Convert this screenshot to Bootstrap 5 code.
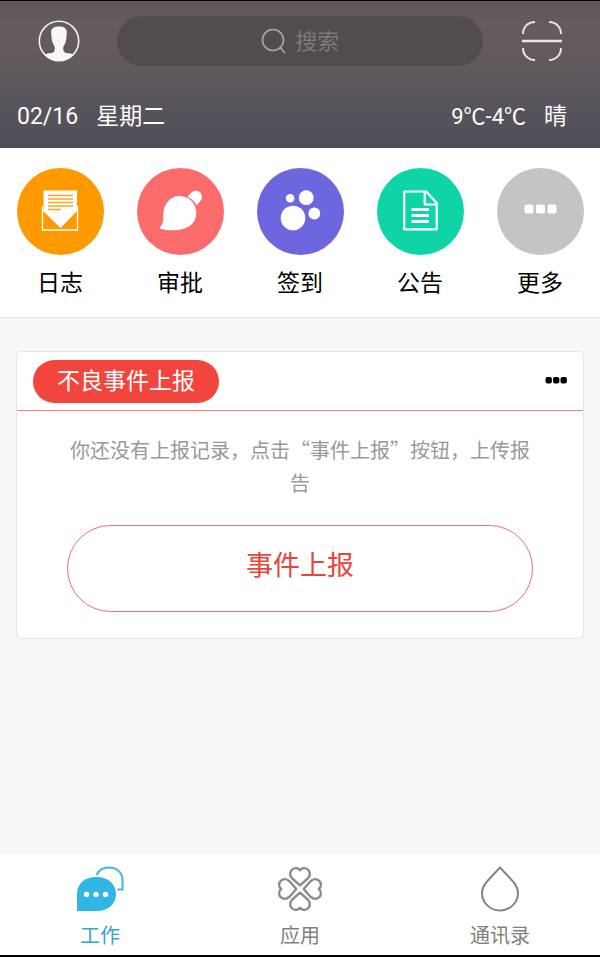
<!DOCTYPE html>
<html lang="zh-CN">
<head>
<meta charset="utf-8">
<meta name="viewport" content="width=device-width, initial-scale=1">
<title>工作</title>
<link href="https://cdn.jsdelivr.net/npm/bootstrap@5.3.0/dist/css/bootstrap.min.css" rel="stylesheet">
<style>
  body { font-family: Roboto, "Noto Sans CJK SC", sans-serif; background: #f7f7f7; color: #000; border-top: 1px solid #000; border-bottom: 2px solid #000; }
  svg { display: block; }
  .top-area { background: linear-gradient(#5d5558, #655c60 18%, #5d575d 55%, #504e58); padding: 15px 0 14px; }
  .side-slot { flex: 0 0 117px; }
  .search-pill { height: 50px; background: #524b50; gap: 8px; }
  .search-glyph { width: 46%; margin-left: 2px; }
  .search-pill input { color: #ddd; font-size: 22px; line-height: 32px; padding: 2px 0 0; outline: 0; min-width: 0; }
  .search-pill input::placeholder { color: #7d7a7c; opacity: 1; }
  .info-row { font-size: 23px; line-height: 34px; padding: 0 33px 0 17px; margin-top: 34px; }
  .info-row .d-flex { gap: 18px; }
  .degrees { font-size: 22px; }
  .shortcut-bar { padding: 20px 0 16px; border-bottom: 1px solid #e2e2e2; }
  .shortcut { font-size: 23px; line-height: 34px; gap: 12px; color: #000; }
  .disc { width: 87px; height: 87px; }
  .disc-orange { background: #ff9900; }
  .disc-coral { background: #fa6c6c; }
  .disc-violet { background: #6e66df; }
  .disc-green { background: #0fd4a7; }
  .disc-gray { background: #c4c4c4; }
  .report-card { margin: 33px 16px; border: 1px solid #e5e5e5; border-radius: 5px; }
  .report-head { padding: 8px 15px 7px 16px; border-bottom: 1px solid #f0857f; }
  .report-tag { background: #f1453d; font-size: 23px; line-height: 43px; padding: 0 24px; font-weight: 400; }
  .report-body { padding: 22px 50px 26px; }
  .report-note { font-family: "Noto Sans CJK SC", sans-serif; font-size: 20px; line-height: 33px; color: #999; margin-bottom: 26px; }
  .report-btn { height: 87px; border: 1px solid #ee716b; color: #e8453c; font-size: 27px; padding: 0 0 4px; }
  .report-btn:hover { background: #f1453d; color: #fff; }
  .tab-item { font-size: 20px; line-height: 30px; gap: 8px; color: #808080; padding: 11px 0 4px; }
  .tab-item.current { color: #33a5cf; }
</style>
<script src="https://cdn.jsdelivr.net/npm/bootstrap@5.3.0/dist/js/bootstrap.bundle.min.js"></script>
</head>
<body class="d-flex flex-column min-vh-100">
<header class="top-area text-white">
  <div class="d-flex align-items-center">
    <div class="side-slot d-flex justify-content-center">
      <button type="button" class="btn p-0 border-0" aria-label="个人中心">
        <svg width="42" height="42" viewBox="0 0 42 42"><circle cx="21" cy="21" r="19.7" fill="none" stroke="#f4f2f3" stroke-width="1.6"/><path fill="#f8f7f8" d="M21 6.500c5.500 0 8 2 7.800 6-.2 5-.6 10-2.800 13-1 1.500-1 4-.3 5.800 1 2.400 6 1.600 9.600 3.200-8 8-20.600 8-28.600 0 3.600-1.600 8.600-.8 9.600-3.200.7-1.800.7-4.300-.3-5.800-2.200-3-2.600-8-2.800-13-.2-4 2.300-6 7.800-6z"/></svg>
      </button>
    </div>
    <label class="search-pill rounded-pill d-flex align-items-center flex-fill">
      <span class="search-glyph d-flex justify-content-end"><svg width="26" height="26" viewBox="0 0 26 26" fill="none" stroke="#aaa6a8" stroke-width="1.600"><circle cx="12" cy="12" r="10.500"/><path d="M19 19.500l5 5.500"/></svg></span>
      <input type="text" class="bg-transparent border-0 flex-fill w-50" placeholder="搜索" aria-label="搜索">
    </label>
    <div class="side-slot d-flex justify-content-center">
      <button type="button" class="btn p-0 border-0" aria-label="扫一扫">
        <svg width="42" height="42" viewBox="0 0 42 42" fill="none" stroke="#e8e6e7" stroke-width="2"><path d="M2 14C2 7 7 2 14 2M28 2c7 0 12 5 12 12M40 28c0 7-5 12-12 12M14 40C7 40 2 35 2 28"/><path d="M1 21h40" stroke-width="2.600"/></svg>
      </button>
    </div>
  </div>
  <div class="info-row d-flex justify-content-between">
    <div class="d-flex"><span>02/16</span><span>星期二</span></div>
    <div class="d-flex"><span class="degrees">9℃-4℃</span><span>晴</span></div>
  </div>
</header>

<nav class="shortcut-bar bg-white" aria-label="快捷入口">
  <div class="row g-0 row-cols-5">
    <a href="#" class="col shortcut d-flex flex-column align-items-center text-decoration-none">
      <span class="disc disc-orange rounded-circle"><svg viewBox="0 0 87 87"><path d="M25.500 41v24h35V41" fill="none" stroke="#fff" stroke-width="1.300" transform="translate(0 -3)"/><path d="M26.500 22.500h33.500v20L43.500 59 26.500 42.500z" fill="#fff"/><path d="M25.500 41.500L43.500 59l17-17.500" fill="none" stroke="#fff" stroke-width="1.300"/><path d="M31 27.500h25M31 31h25M31 34.500h25M31 38h25M31 41.500h13" stroke="#ffa628" stroke-width="1.300"/></svg></span>
      <span>日志</span>
    </a>
    <a href="#" class="col shortcut d-flex flex-column align-items-center text-decoration-none">
      <span class="disc disc-coral rounded-circle"><svg viewBox="0 0 87 87"><path fill="#fff" d="M22.300 60.500c3.500-4 4-7 4-13.500 0-11 7-19 16-19 9.500 0 17 7 17 17 0 11-9 17-22 17.300-5.500.1-10-.3-15-1.800z"/><path fill="#fff" d="M50.500 29l3.500-4c4-4.500 11-2 11 4 0 2-1 3.300-2 4.500l-3.400 3.800c-2-3.800-5-6.800-9.100-8.300z"/></svg></span>
      <span>审批</span>
    </a>
    <a href="#" class="col shortcut d-flex flex-column align-items-center text-decoration-none">
      <span class="disc disc-violet rounded-circle"><svg viewBox="0 0 87 87" fill="#fff"><circle cx="36" cy="50" r="12.300"/><circle cx="49.200" cy="29.700" r="7.400"/><circle cx="33.200" cy="30.200" r="4.300"/><circle cx="57.300" cy="45.500" r="5.900"/></svg></span>
      <span>签到</span>
    </a>
    <a href="#" class="col shortcut d-flex flex-column align-items-center text-decoration-none">
      <span class="disc disc-green rounded-circle"><svg viewBox="0 0 87 87" fill="none" stroke="#fff" stroke-width="2.200" stroke-linejoin="round"><path d="M27.200 23.500h22L59.700 35v26.300H27.200zM47.700 24v12.500h12"/><path d="M34.500 41.500H52M34.500 47.500H52M34.500 53.500H52" stroke-width="2.800"/></svg></span>
      <span>公告</span>
    </a>
    <a href="#" class="col shortcut d-flex flex-column align-items-center text-decoration-none">
      <span class="disc disc-gray rounded-circle"><svg viewBox="0 0 87 87" fill="#fff"><rect x="27.500" y="36.500" width="9" height="9" rx="2"/><rect x="39" y="36.500" width="9" height="9" rx="2"/><rect x="50.500" y="36.500" width="9" height="9" rx="2"/></svg></span>
      <span>更多</span>
    </a>
  </div>
</nav>

<main class="flex-grow-1">
  <section class="report-card bg-white">
    <div class="report-head d-flex justify-content-between align-items-center">
      <h1 class="report-tag rounded-pill text-white m-0">不良事件上报</h1>
      <button type="button" class="btn p-0 border-0" aria-label="更多操作">
        <svg width="23" height="12" viewBox="0 0 23 12"><rect x=".5" y="1" width="6.400" height="6.400" rx="2"/><rect x="8" y="1" width="6.400" height="6.400" rx="2"/><rect x="15.500" y="1" width="6.400" height="6.400" rx="2"/></svg>
      </button>
    </div>
    <div class="report-body text-center">
      <p class="report-note">你还没有上报记录，点击“事件上报”按钮，上传报告</p>
      <button type="button" class="report-btn btn rounded-pill w-100">事件上报</button>
    </div>
  </section>
</main>

<nav class="bg-white" aria-label="主导航">
  <div class="row g-0 row-cols-3">
    <a href="#" class="col tab-item current d-flex flex-column align-items-center text-decoration-none" aria-current="page">
      <svg width="48" height="48" viewBox="0 0 48 48"><path d="M20.500 10C23 4.500 28 2.500 33 2.500c8 0 13.500 5.500 13.500 12.500v9.500h-5" fill="none" stroke="#3db9e2" stroke-width="2"/><path fill="#30b5e5" d="M1 46V29C1 18.500 9 12 20 12h1c11 0 19 7 19 17s-8 17-19 17z"/><g fill="#fff"><circle cx="10.500" cy="29.500" r="2.700"/><circle cx="20" cy="29.500" r="2.700"/><circle cx="29.500" cy="29.500" r="2.700"/></g></svg>
      <span>工作</span>
    </a>
    <a href="#" class="col tab-item d-flex flex-column align-items-center text-decoration-none">
      <svg width="48" height="48" viewBox="0 0 48 48" fill="none" stroke="#8b8b8d" stroke-width="2.400" stroke-linejoin="round"><path id="leaf" d="M24 20.300L16.300 13.500C13.600 10.800 14 7.500 15.200 5.600 17.300 2.400 21.800 2.200 24 5.200 26.200 2.200 30.700 2.400 32.800 5.600 34 7.500 34.400 10.800 31.700 13.500z"/><use href="#leaf" transform="rotate(90 24 24)"/><use href="#leaf" transform="rotate(180 24 24)"/><use href="#leaf" transform="rotate(270 24 24)"/></svg>
      <span>应用</span>
    </a>
    <a href="#" class="col tab-item d-flex flex-column align-items-center text-decoration-none">
      <svg width="48" height="48" viewBox="0 0 48 48" fill="none" stroke="#848486" stroke-width="2"><path d="M24 2.500L11 16.500C8 20 6 23.500 6 28a18 17.500 0 0 0 36 0c0-4.500-2-8-5-11.500z"/></svg>
      <span>通讯录</span>
    </a>
  </div>
</nav>
</body>
</html>
